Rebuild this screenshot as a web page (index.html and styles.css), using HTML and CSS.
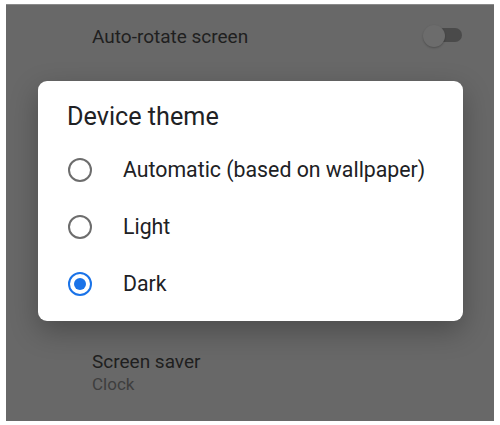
FILE: index.html
```html
<!DOCTYPE html>
<html>
<head>
<meta charset="utf-8">
<link rel="stylesheet" href="styles.css">
</head>
<body>
<div class="screen">
  <div class="settings">
    <div class="row row-toggle">
      <span class="row-title">Auto-rotate screen</span>
      <span class="toggle"><span class="track"></span><span class="thumb"></span></span>
    </div>
    <div class="row row-saver">
      <span class="row-title">Screen saver</span>
      <span class="row-sub">Clock</span>
    </div>
  </div>
  <div class="dialog">
    <div class="dialog-title">Device theme</div>
    <div class="options">
      <div class="option"><span class="radio"></span><span class="label">Automatic (based on wallpaper)</span></div>
      <div class="option"><span class="radio"></span><span class="label">Light</span></div>
      <div class="option"><span class="radio checked"></span><span class="label">Dark</span></div>
    </div>
  </div>
</div>
</body>
</html>
```
FILE: styles.css
```css
html, body {
  margin: 0;
  padding: 0;
  background: #ffffff;
}
body {
  padding: 4px 6px 4px 6px;
  font-family: Roboto, "Liberation Sans", sans-serif;
}
.screen {
  position: relative;
  height: 417px;
  background: #686868;
  border-top: 1px solid #8a8a8a;
  box-sizing: border-box;
  overflow: hidden;
}
.settings {
  display: flex;
  flex-direction: column;
  padding-left: 86px;
}
.row {
  display: flex;
}
.row-toggle {
  height: 64px;
  align-items: center;
  justify-content: space-between;
  padding-right: 32px;
  margin-top: -1px;
}
.row-title {
  font-size: 19px;
  color: #1f1f1f;
}
.row-saver {
  flex-direction: column;
  margin-top: 282px;
}
.row-sub {
  font-size: 17px;
  color: #3e3e3e;
  margin-top: 1px;
}
.toggle {
  position: relative;
  width: 39px;
  height: 22px;
  display: block;
  margin-top: -2px;
}
.track {
  position: absolute;
  left: 2px;
  right: 0;
  top: 4px;
  height: 14px;
  border-radius: 7px;
  background: #4a4a4a;
}
.thumb {
  position: absolute;
  left: 0;
  top: 1px;
  width: 22px;
  height: 22px;
  border-radius: 50%;
  background: #6c6c6c;
  box-shadow: 0 1px 2px rgba(0,0,0,0.25);
}
.dialog {
  position: absolute;
  left: 32px;
  top: 76px;
  width: 425px;
  height: 240px;
  background: #ffffff;
  border-radius: 9px;
  box-shadow: 0 10px 28px rgba(0,0,0,0.28);
  box-sizing: border-box;
  padding: 21px 0 0 29px;
}
.dialog-title {
  font-size: 25.2px;
  color: #202124;
  line-height: 30px;
}
.options {
  display: flex;
  flex-direction: column;
  margin-top: 9px;
}
.option {
  display: flex;
  align-items: center;
  height: 57px;
}
.radio {
  width: 24px;
  height: 24px;
  box-sizing: border-box;
  border: 2.5px solid #6d6d6d;
  border-radius: 50%;
  margin-left: 1px;
  margin-right: 31px;
  display: flex;
  align-items: center;
  justify-content: center;
}
.radio.checked {
  border-color: #1a73e8;
}
.radio.checked::after {
  content: "";
  width: 12px;
  height: 12px;
  border-radius: 50%;
  background: #1a73e8;
}
.label {
  font-size: 21.3px;
  color: #202124;
}
```
